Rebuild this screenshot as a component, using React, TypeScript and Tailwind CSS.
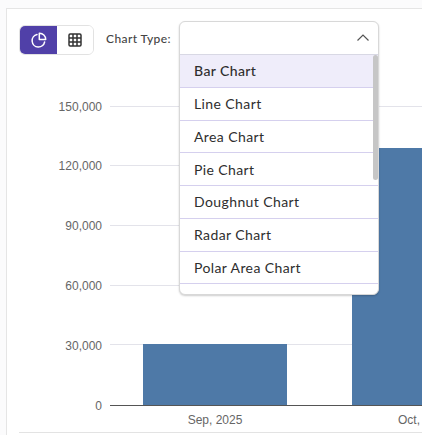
const chartTypes = ['Bar Chart', 'Line Chart', 'Area Chart', 'Pie Chart', 'Doughnut Chart', 'Radar Chart', 'Polar Area Chart']

const ticks = [
  { label: '150,000', y: 107, textY: 111 },
  { label: '120,000', y: 166, textY: 170 },
  { label: '90,000', y: 226, textY: 230 },
  { label: '60,000', y: 286, textY: 290 },
  { label: '30,000', y: 345, textY: 350 },
]

function Chart() {
  return (
    <svg width="415" height="379" viewBox="7 56 415 379" className="block" style={{ fontFamily: '"Liberation Sans", Arial, sans-serif' }}>
      {ticks.map((t) => (
        <g key={t.label}>
          <line x1="110" x2="422" y1={t.y - 0.5} y2={t.y - 0.5} stroke="#e3e3ea" />
          <text x="102" y={t.textY} textAnchor="end" fontSize="12" fill="#666666">{t.label}</text>
        </g>
      ))}
      <rect x="143" y="344" width="144" height="61" fill="#4e79a7" />
      <rect x="352" y="148" width="70" height="257" fill="#4e79a7" />
      <line x1="110" x2="422" y1="405.5" y2="405.5" stroke="#555555" />
      <text x="102" y="410" textAnchor="end" fontSize="12" fill="#666666">0</text>
      <text x="215" y="424" textAnchor="middle" fontSize="12" fill="#666666">Sep, 2025</text>
      <text x="398" y="424" fontSize="12" fill="#666666">Oct, 2025</text>
    </svg>
  )
}

export default function App() {
  return (
    <div className="w-[422px] h-[435px] overflow-hidden bg-[#fbfbfc] pl-[6px] pt-[8px] font-['Lato',sans-serif]">
      <div className="relative h-[427px] border-l border-t border-[#e5e5e5] bg-white">
        <div className="flex h-[33px] items-center pl-[12px] pt-[14px] box-content">
          <div className="flex h-[30px] w-[75px] overflow-hidden rounded-[6px] border border-[#e2e2e2]">
            <button className="flex w-[37px] items-center justify-center bg-[#5040a8]">
              <svg width="16" height="16" viewBox="0 0 16 16" fill="none" stroke="white" strokeWidth="1.5" strokeLinecap="round" strokeLinejoin="round">
                <path d="M6 2.6A6.3 6.3 0 1 0 13.6 10" />
                <path d="M8.3 1.3A6.2 6.2 0 0 1 14.7 7.6H8.3Z" />
              </svg>
            </button>
            <button className="flex flex-1 items-center justify-center bg-white">
              <svg width="14" height="14" viewBox="0 0 14 14" fill="none" stroke="#333333" strokeWidth="1.5">
                <rect x="1" y="1" width="12" height="12" rx="1.2" />
                <path d="M1 5H13M1 9H13M5 1V13M9 1V13" />
              </svg>
            </button>
          </div>
          <span className="mb-[2px] ml-[12px] w-[73px] text-[12px] font-medium tracking-[0.4px] text-[#444444]">Chart Type:</span>
        </div>

        <div className="absolute left-[172px] top-[12px] z-10 w-[200px] overflow-hidden rounded-[6px] border border-[#d8d8d8] bg-white shadow-[0_1px_2px_rgba(0,0,0,0.2)]">
          <div className="flex h-[33px] items-center justify-end border-b border-[#d8d8e4] pr-[7px]">
            <svg width="16" height="16" viewBox="0 0 16 16" fill="none" stroke="#555555" strokeWidth="1.2">
              <path d="M2.5 10.5L8 5L13.5 10.5" />
            </svg>
          </div>
          <div className="relative h-[239px]">
            <ul>
              {chartTypes.map((name, i) => (
                <li
                  key={name}
                  className={
                    i === 0
                      ? 'flex h-[32.75px] items-center border-b border-[#d5d0ee] bg-[#efedfa] pl-[14px] text-[14px] font-medium tracking-[0.4px] text-[#2e2e2e]'
                      : 'flex h-[32.75px] items-center border-b border-[#d5d0ee] pl-[14px] text-[14px] tracking-[0.4px] text-[#2e2e2e]'
                  }
                >
                  {name}
                </li>
              ))}
            </ul>
            <div className="absolute right-0 top-0 h-[125px] w-[5px] rounded-full bg-[#c6c6c6]" />
          </div>
        </div>

        <Chart />
        <div className="absolute left-[12px] right-0 top-[423px] h-px bg-[#e3e3e3]" />
      </div>
    </div>
  )
}
